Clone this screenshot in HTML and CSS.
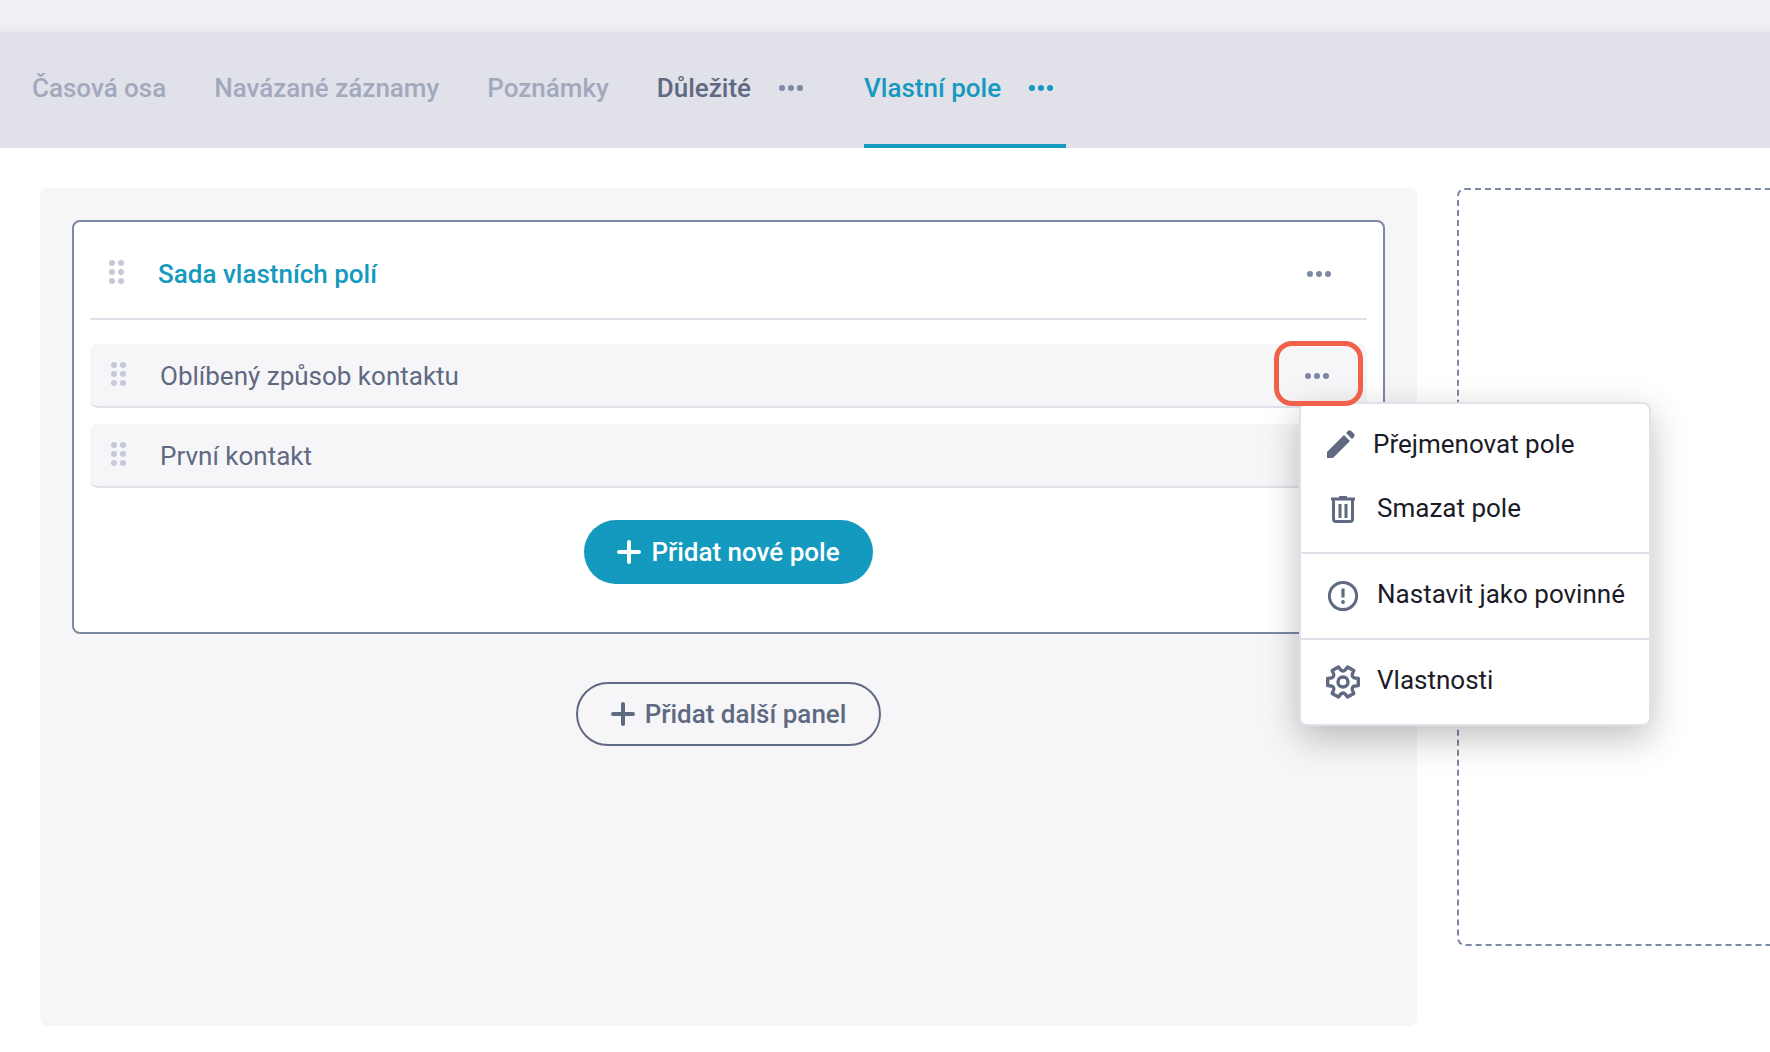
FILE: index.html
```html
<!DOCTYPE html>
<html lang="cs">
<head>
<meta charset="utf-8">
<meta name="viewport" content="width=device-width, initial-scale=1">
<title>Vlastní pole</title>
<link rel="stylesheet" href="styles.css">
</head>
<body>

<div class="topbar"></div>

<nav class="tabs">
  <a href="#" class="tab">Časová osa</a>
  <a href="#" class="tab">Navázané záznamy</a>
  <a href="#" class="tab">Poznámky</a>
  <div class="tab tab-custom">
    <a href="#">Důležité</a>
    <button class="dots" aria-label="Možnosti"><svg width="24" height="6"><circle cx="3" cy="3" r="3"/><circle cx="12" cy="3" r="3"/><circle cx="21" cy="3" r="3"/></svg></button>
  </div>
  <div class="tab tab-custom active">
    <a href="#">Vlastní pole</a>
    <button class="dots" aria-label="Možnosti"><svg width="24" height="6"><circle cx="3" cy="3" r="3"/><circle cx="12" cy="3" r="3"/><circle cx="21" cy="3" r="3"/></svg></button>
  </div>
</nav>

<main class="content">
  <section class="panel">
    <div class="card">
      <div class="card-header">
        <svg class="handle" width="16" height="24"><circle cx="3" cy="3" r="3"/><circle cx="12" cy="3" r="3"/><circle cx="3" cy="12" r="3"/><circle cx="12" cy="12" r="3"/><circle cx="3" cy="21" r="3"/><circle cx="12" cy="21" r="3"/></svg>
        <h2>Sada vlastních polí</h2>
        <button class="dots" aria-label="Možnosti"><svg width="24" height="6"><circle cx="3" cy="3" r="3"/><circle cx="12" cy="3" r="3"/><circle cx="21" cy="3" r="3"/></svg></button>
      </div>

      <div class="field">
        <svg class="handle" width="16" height="24"><circle cx="3" cy="3" r="3"/><circle cx="12" cy="3" r="3"/><circle cx="3" cy="12" r="3"/><circle cx="12" cy="12" r="3"/><circle cx="3" cy="21" r="3"/><circle cx="12" cy="21" r="3"/></svg>
        <span class="field-name">Oblíbený způsob kontaktu</span>
        <div class="field-actions open">
          <button class="dots" aria-label="Možnosti"><svg width="24" height="6"><circle cx="3" cy="3" r="3"/><circle cx="12" cy="3" r="3"/><circle cx="21" cy="3" r="3"/></svg></button>

          <div class="menu">
            <div class="menu-group">
              <button>
                <svg width="28" height="28" viewBox="0 0 28 28"><path d="M0 28v-6L17 5l6 6L6 28zM19 3l2-2q1.600-1.600 3.200 0l2.800 2.800q1.600 1.600 0 3.200l-2 2z"/></svg>
                Přejmenovat pole
              </button>
              <button>
                <svg width="32" height="32" viewBox="0 0 32 32"><path d="M4 5.500h8V4h8v1.500h8v3H4z"/><path class="line" d="M6.500 8v19q0 2.500 2.500 2.500h14q2.500 0 2.500-2.500V8"/><path class="line" d="M13 12v14M19 12v14"/></svg>
                Smazat pole
              </button>
            </div>
            <div class="menu-group">
              <button>
                <svg width="32" height="32" viewBox="0 0 32 32"><circle class="line" cx="16" cy="18" r="13.600"/><path d="M14.400 10.500h3.200v9h-3.200z"/><circle cx="16" cy="24" r="1.900"/></svg>
                Nastavit jako povinné
              </button>
            </div>
            <div class="menu-group">
              <button>
                <svg width="32" height="32" viewBox="-16 -18 32 32"><circle class="line thick" r="5"/><path class="line thick" d="M12-4L15.300-3.600V3.600L12 4Q8.200 4.800 9.500 8.400L10.800 11.400 4.500 15 2.500 12.400Q0 9.500-2.500 12.400L-4.500 15-10.800 11.400-9.500 8.400Q-8.200 4.800-12 4L-15.300 3.600V-3.600L-12-4Q-8.200-4.800-9.500-8.400L-10.800-11.400-4.500-15-2.500-12.400Q0-9.500 2.500-12.400L4.500-15 10.800-11.400 9.500-8.400Q8.200-4.800 12-4z"/></svg>
                Vlastnosti
              </button>
            </div>
          </div>
        </div>
      </div>

      <div class="field">
        <svg class="handle" width="16" height="24"><circle cx="3" cy="3" r="3"/><circle cx="12" cy="3" r="3"/><circle cx="3" cy="12" r="3"/><circle cx="12" cy="12" r="3"/><circle cx="3" cy="21" r="3"/><circle cx="12" cy="21" r="3"/></svg>
        <span class="field-name">První kontakt</span>
      </div>

      <button class="btn btn-primary">
        <svg width="24" height="24"><path d="M12 2v20M2 12h20"/></svg>
        Přidat nové pole
      </button>
    </div>

    <button class="btn btn-outline">
      <svg width="24" height="24"><path d="M12 2v20M2 12h20"/></svg>
      Přidat další panel
    </button>
  </section>

  <aside class="dropzone"></aside>
</main>

</body>
</html>
```

FILE: styles.css
```css
*,
*::after {
  box-sizing: border-box;
}

body {
  margin: 0;
  background-color: #fff;
  color: #5f6981;
  font-family: Roboto, "Liberation Sans", sans-serif;
  font-size: 26px;
  line-height: 32px;
}

a {
  color: inherit;
  text-decoration: none;
}

button {
  border: none;
  background: none;
  padding: 0;
  color: inherit;
  font: inherit;
  cursor: pointer;
}

svg {
  display: block;
  flex-shrink: 0;
  fill: currentColor;
  overflow: visible;
}

.topbar {
  height: 32px;
  background: linear-gradient(#eff0f4 22px, #e9eaec);
}

/* ---- tabs ---- */

.tabs {
  display: flex;
  gap: 48px;
  height: 116px;
  padding: 0 32px;
  background-color: #e1e1ea;
  font-weight: 500;
  white-space: nowrap;
}

.tab {
  display: flex;
  align-items: center;
  border-bottom: 4px solid transparent;
  color: #a2a9bd;
}

.tab-custom {
  gap: 28px;
  padding-right: 13px;
  color: #5f6981;
}

.dots {
  color: #7c89a3;
}

.active,
.active .dots {
  color: #1499bf;
}

.active {
  border-color: #1499bf;
}

/* ---- content ---- */

.content {
  display: grid;
  grid-template-columns: 22fr 5fr;
  align-items: start;
  gap: 40px;
  padding: 40px 0 26px 40px;
}

.panel {
  min-height: 838px;
  padding: 32px;
  border-radius: 8px;
  background-color: #f6f6f9;
}

.card {
  padding: 0 16px 48px;
  border: 2px solid #7c89a3;
  border-radius: 8px;
  background-color: #fff;
}

.card-header {
  display: flex;
  align-items: center;
  height: 98px;
  margin-bottom: 24px;
  padding: 8px 18px 0 19px;
  border-bottom: 2px solid #e1e1ea;
}

.card-header h2 {
  flex: 1;
  margin: 0;
  color: #1499bf;
  font-size: 26px;
  font-weight: 500;
}

.handle {
  margin: 0 33px 4px 0;
  color: #c5c9d8;
}

.card .dots {
  display: flex;
  align-items: center;
  height: 64px;
  padding: 0 18px;
}

.field {
  display: flex;
  align-items: center;
  height: 64px;
  margin-bottom: 16px;
  padding: 2px 20px 0 21px;
  border-bottom: 2px solid #e1e1ea;
  border-radius: 8px;
  background-color: #f6f6f9;
}

.field-name {
  flex: 1;
}

.field-actions {
  position: relative;
}

/* ring around the opened options button */
.open::after {
  content: "";
  position: absolute;
  z-index: 11;
  top: -3px;
  left: -13px;
  width: 89px;
  height: 65px;
  border: 5px solid #f0604a;
  border-radius: 18px;
  pointer-events: none;
}

/* ---- menu ---- */

.menu {
  position: absolute;
  z-index: 10;
  top: 58px;
  left: 12px;
  width: 352px;
  border: 2px solid #e1e1ea;
  border-radius: 8px;
  background-color: #fff;
  box-shadow: 0 12px 36px rgba(0, 0, 0, 0.25);
  color: #1b1c28;
}

.menu-group {
  padding: 8px 0 12px;
}

.menu-group + .menu-group {
  border-top: 2px solid #e1e1ea;
}

.menu button {
  display: flex;
  align-items: center;
  gap: 18px;
  width: 100%;
  height: 64px;
  padding-left: 26px;
  white-space: nowrap;
}

.menu svg {
  color: #5f6981;
}

.menu .line {
  fill: none;
  stroke: currentColor;
  stroke-width: 3;
  stroke-linejoin: round;
}

.menu .thick {
  stroke-width: 3.4;
}

/* ---- buttons ---- */

.btn {
  display: flex;
  align-items: center;
  gap: 10px;
  height: 64px;
  margin: 32px auto 0;
  padding: 0 33px;
  border-radius: 32px;
  font-weight: 500;
}

.btn path {
  stroke: currentColor;
  stroke-width: 4;
  stroke-linecap: round;
}

.btn-primary {
  background-color: #1499bf;
  color: #fff;
}

.btn-outline {
  margin-top: 48px;
  border: 2px solid #5f6981;
}

.dropzone {
  height: 758px;
  border: 2px dashed #7c89a3;
  border-right: none;
  border-radius: 8px 0 0 8px;
}
```
